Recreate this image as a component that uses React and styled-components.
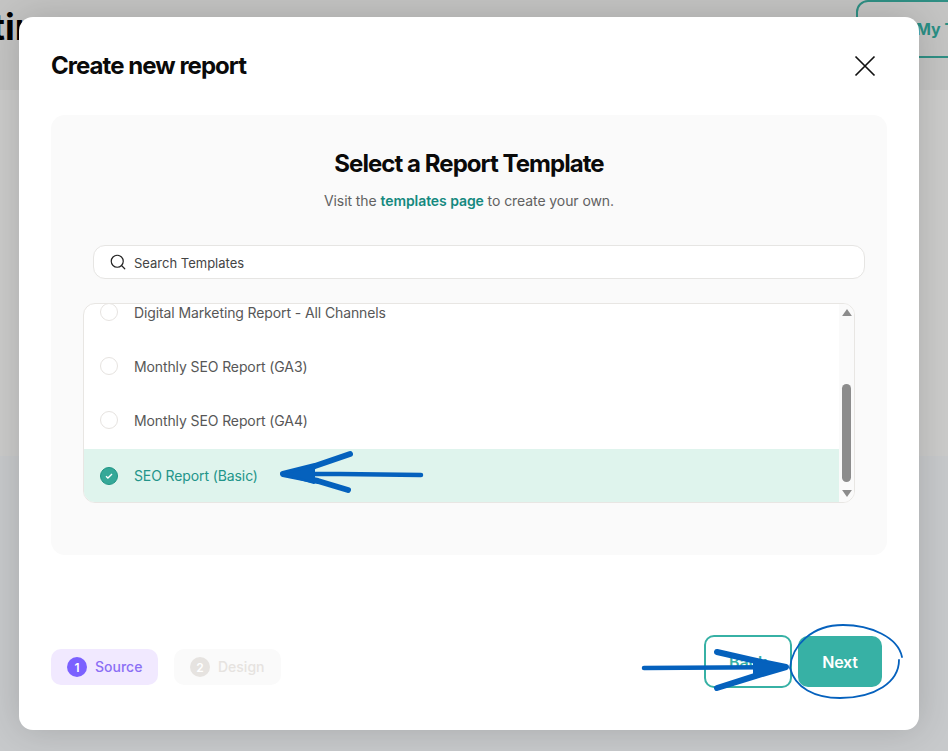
import React from 'react';
import styled, { createGlobalStyle } from 'styled-components';
import { Search } from 'lucide-react';

const GlobalStyle = createGlobalStyle`
  html, body {
    margin: 0;
    padding: 0;
    height: 100%;
    overflow: hidden;
    font-family: Inter, "Liberation Sans", sans-serif;
  }
`;

const Page = styled.div`
  position: relative;
  width: 948px;
  height: 751px;
  overflow: hidden;
  display: flex;
  flex-direction: column;
`;

const TopBar = styled.header`
  height: 90px;
  flex-shrink: 0;
  background: #c4c4c3;
  display: flex;
  justify-content: space-between;
  align-items: flex-start;
  overflow: hidden;
`;

const BrandTitle = styled.div`
  margin: 5px 0 0 -113px;
  font-size: 36px;
  line-height: 44px;
  font-weight: 700;
  color: #000;
  white-space: nowrap;
`;

const TemplatesLink = styled.div`
  flex-shrink: 0;
  box-sizing: border-box;
  width: 140px;
  height: 58px;
  margin: 0 -48px 0 0;
  padding-left: 58px;
  border: 2px solid #2f8f84;
  border-radius: 12px;
  display: flex;
  align-items: center;
  color: #2a8f85;
  font-size: 16px;
  font-weight: 700;
  white-space: nowrap;
  overflow: hidden;
`;

const MiddleBand = styled.div`
  height: 366px;
  flex-shrink: 0;
  background: #cbcbca;
`;

const LowerBand = styled.div`
  flex: 1;
  background: #c7c9cb;
`;

const Modal = styled.div`
  position: absolute;
  left: 19px;
  top: 17px;
  box-sizing: border-box;
  width: 900px;
  height: 713px;
  padding: 0 32px;
  background: #fff;
  border-radius: 14px;
  box-shadow: 0 0 36px rgba(0, 0, 0, 0.16);
  display: flex;
  flex-direction: column;
`;

const ModalHeader = styled.div`
  height: 98px;
  flex-shrink: 0;
  display: flex;
  align-items: center;
  justify-content: space-between;
`;

const ModalTitle = styled.h2`
  margin: 0;
  font-size: 24px;
  line-height: 30px;
  font-weight: 700;
  letter-spacing: -0.96px;
  color: #0a0a0a;
`;

const CloseButton = styled.button`
  width: 22px;
  height: 22px;
  margin-right: 11px;
  padding: 0;
  border: 0;
  background: none;
  display: flex;
  color: #111;
`;

const Panel = styled.section`
  box-sizing: border-box;
  height: 440px;
  flex-shrink: 0;
  padding: 34px 32px 0;
  background: #fafafa;
  border-radius: 14px;
  display: flex;
  flex-direction: column;
  align-items: center;
`;

const PanelTitle = styled.h3`
  margin: 0;
  font-size: 24px;
  line-height: 30px;
  font-weight: 700;
  letter-spacing: -0.95px;
  color: #0a0a0a;
`;

const PanelHint = styled.p`
  margin: 13px 0 0;
  font-size: 14px;
  line-height: 18px;
  letter-spacing: -0.08px;
  color: #616161;
`;

const TemplatesAnchor = styled.a`
  color: #15897f;
  font-weight: 600;
`;

const SearchBox = styled.div`
  box-sizing: border-box;
  width: 772px;
  height: 34px;
  margin: 35px 0 0 20px;
  padding-left: 15px;
  background: #fff;
  border: 1px solid #e6e5e3;
  border-radius: 12px;
  display: flex;
  align-items: center;
  gap: 7px;
  color: #222;
`;

const SearchText = styled.span`
  margin-top: 2px;
  font-size: 13px;
  color: #444;
`;

const TemplateList = styled.div`
  box-sizing: border-box;
  width: 772px;
  height: 200px;
  margin-top: 24px;
  background: #fff;
  border: 1px solid #e8e6e3;
  border-radius: 12px;
  overflow: hidden;
  display: flex;
`;

const Rows = styled.div`
  flex: 1;
  display: flex;
  flex-direction: column;
  justify-content: flex-end;
`;

const Row = styled.div`
  box-sizing: border-box;
  height: ${(p) => (p.$selected ? 53 : 54)}px;
  flex-shrink: 0;
  padding: 0 0 ${(p) => (p.$selected ? 0 : 4)}px 16px;
  display: flex;
  align-items: center;
  gap: 16px;
  background: ${(p) => (p.$selected ? '#dff4ed' : 'transparent')};
  color: ${(p) => (p.$selected ? '#23948a' : '#575757')};
  font-size: 14px;
  letter-spacing: -0.11px;
`;

const Radio = styled.span`
  box-sizing: border-box;
  width: 18px;
  height: 18px;
  border-radius: 50%;
  border: 1px solid ${(p) => (p.$checked ? '#1f9484' : '#e6e3e0')};
  background: ${(p) => (p.$checked ? '#35a898' : '#fff')};
  display: flex;
  align-items: center;
  justify-content: center;
`;

const ScrollTrack = styled.div`
  width: 15px;
  flex-shrink: 0;
  background: #fafafa;
  display: flex;
  flex-direction: column;
  align-items: center;
  padding: 5px 0 5px;
  box-sizing: border-box;
`;

const ScrollThumb = styled.div`
  width: 9px;
  height: 100px;
  margin-top: 68px;
  border-radius: 5px;
  background: #8c8c8c;
`;

const ScrollArrow = styled.svg`
  display: block;
  width: 10px;
  height: 7px;
  fill: #8c8c8c;
  margin-top: ${(p) => p.$gap || 0}px;
`;

const Footer = styled.div`
  flex: 1;
  display: flex;
  align-items: flex-start;
  justify-content: space-between;
  padding: 80px 5px 0 0;
`;

const Steps = styled.div`
  display: flex;
  gap: 16px;
  margin-top: 14px;
`;

const Step = styled.div`
  box-sizing: border-box;
  width: 107px;
  height: 36px;
  padding-left: 16px;
  border-radius: 10px;
  background: ${(p) => (p.$active ? '#f1e9ff' : '#fafafa')};
  color: ${(p) => (p.$active ? '#8b6ff5' : '#e6e3e0')};
  display: flex;
  align-items: center;
  gap: 8px;
  font-size: 14px;
  font-weight: 500;
`;

const StepLabel = styled.span`
  margin-bottom: 2px;
`;

const StepNumber = styled.span`
  width: 20px;
  height: 20px;
  border-radius: 50%;
  background: ${(p) => (p.$active ? '#7b61ff' : '#e6e3e0')};
  color: #fff;
  font-size: 12px;
  font-weight: 600;
  display: flex;
  align-items: center;
  justify-content: center;
`;

const Actions = styled.div`
  display: flex;
  align-items: center;
  gap: 6px;
`;

const BackButton = styled.button`
  box-sizing: border-box;
  width: 88px;
  height: 53px;
  border: 2px solid #37b1a5;
  border-radius: 10px;
  background: #fff;
  color: #37b1a5;
  font: 600 16px Inter, "Liberation Sans", sans-serif;
`;

const NextButton = styled.button`
  box-sizing: border-box;
  width: 84px;
  height: 51px;
  border: 0;
  border-radius: 10px;
  background: #37b1a5;
  color: #fff;
  font: 600 16px Inter, "Liberation Sans", sans-serif;
  letter-spacing: -0.2px;
`;

// blue marker scribbles drawn on top of the screenshot
const Annotations = styled.svg`
  position: absolute;
  left: 0;
  top: 0;
  pointer-events: none;
`;

const templates = [
  { name: 'Digital Marketing Report - All Channels' },
  { name: 'Monthly SEO Report (GA3)' },
  { name: 'Monthly SEO Report (GA4)' },
  { name: 'SEO Report (Basic)', selected: true },
];

export default function App() {
  return (
    <Page>
      <GlobalStyle />
      <TopBar>
        <BrandTitle>Reporting</BrandTitle>
        <TemplatesLink>My Templates</TemplatesLink>
      </TopBar>
      <MiddleBand />
      <LowerBand />

      <Modal>
        <ModalHeader>
          <ModalTitle>Create new report</ModalTitle>
          <CloseButton aria-label="Close">
            <svg width="22" height="22" viewBox="0 0 22 22" fill="none" stroke="currentColor" strokeWidth="1.7">
              <path d="M1.5 1.5 20.5 20.5M20.5 1.5 1.5 20.5" />
            </svg>
          </CloseButton>
        </ModalHeader>

        <Panel>
          <PanelTitle>Select a Report Template</PanelTitle>
          <PanelHint>
            Visit the <TemplatesAnchor>templates page</TemplatesAnchor> to create your own.
          </PanelHint>
          <SearchBox>
            <Search size={18} strokeWidth={1.6} />
            <SearchText>Search Templates</SearchText>
          </SearchBox>
          <TemplateList>
            <Rows>
              {templates.map((t) => (
                <Row key={t.name} $selected={t.selected}>
                  <Radio $checked={t.selected}>
                    {t.selected && (
                      <svg width="8" height="6" viewBox="0 0 10 8" fill="none" stroke="#fff" strokeWidth="1.8">
                        <path d="M1 4.2 3.6 6.6 9 1.2" />
                      </svg>
                    )}
                  </Radio>
                  {t.name}
                </Row>
              ))}
            </Rows>
            <ScrollTrack>
              <ScrollArrow viewBox="0 0 10 7">
                <path d="M5 0 10 7H0Z" />
              </ScrollArrow>
              <ScrollThumb />
              <ScrollArrow viewBox="0 0 10 7" $gap={8}>
                <path d="M0 0H10L5 7Z" />
              </ScrollArrow>
            </ScrollTrack>
          </TemplateList>
        </Panel>

        <Footer>
          <Steps>
            <Step $active>
              <StepNumber $active>1</StepNumber>
              <StepLabel>Source</StepLabel>
            </Step>
            <Step>
              <StepNumber>2</StepNumber>
              <StepLabel>Design</StepLabel>
            </Step>
          </Steps>
          <Actions>
            <BackButton>Back</BackButton>
            <NextButton>Next</NextButton>
          </Actions>
        </Footer>
      </Modal>

      <Annotations width="948" height="751" viewBox="0 0 948 751" fill="none" stroke="#0561bd" strokeLinecap="round" strokeLinejoin="round">
        <path d="M421 475 340 474 283 474" strokeWidth="4.5" />
        <path d="M350 454 315 466 283 474 318 481 348 490" strokeWidth="6" />
        <path d="M283 474 314 465 314 483Z" fill="#0561bd" strokeWidth="2" />
        <path d="M644 668 786 667" strokeWidth="4.5" />
        <path d="M717 652 752 660 786 667 752 677 717 688" strokeWidth="6" />
        <path d="M786 667 754 659 754 678Z" fill="#0561bd" strokeWidth="2" />
        <path
          d="M902 657C898 637 870 625 843 625 812 625 792 645 790 668 795 688 815 698 840 698 875 698 899 682 899 660"
          strokeWidth="1.8"
        />
      </Annotations>
    </Page>
  );
}
